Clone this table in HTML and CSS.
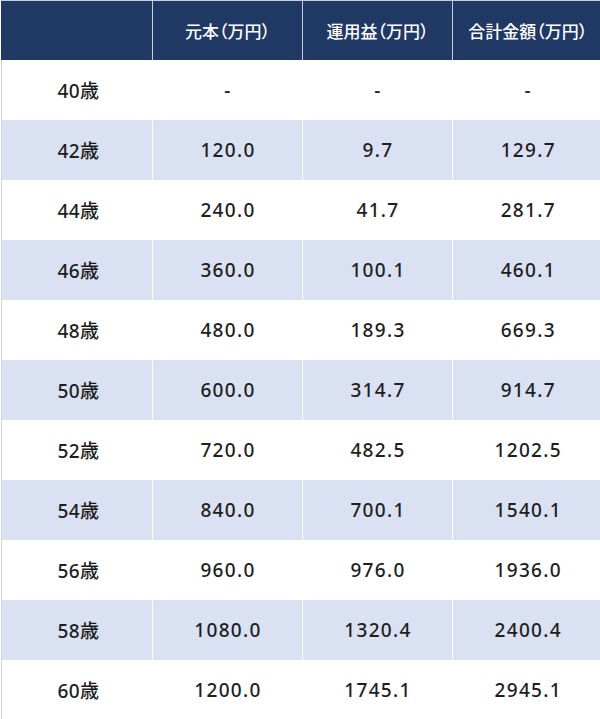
FILE: index.html
```html
<!DOCTYPE html>
<html lang="ja">
<head>
<meta charset="utf-8">
<link rel="stylesheet" href="styles.css">
</head>
<body>
<table class="sim">
  <colgroup>
    <col class="c-age"><col class="c-val"><col class="c-val"><col class="c-val">
  </colgroup>
  <thead>
    <tr><th></th><th>元本（万円）</th><th>運用益（万円）</th><th>合計金額（万円）</th></tr>
  </thead>
  <tbody>
    <tr><td>40歳</td><td>-</td><td>-</td><td>-</td></tr>
    <tr><td>42歳</td><td>120.0</td><td>9.7</td><td>129.7</td></tr>
    <tr><td>44歳</td><td>240.0</td><td>41.7</td><td>281.7</td></tr>
    <tr><td>46歳</td><td>360.0</td><td>100.1</td><td>460.1</td></tr>
    <tr><td>48歳</td><td>480.0</td><td>189.3</td><td>669.3</td></tr>
    <tr><td>50歳</td><td>600.0</td><td>314.7</td><td>914.7</td></tr>
    <tr><td>52歳</td><td>720.0</td><td>482.5</td><td>1202.5</td></tr>
    <tr><td>54歳</td><td>840.0</td><td>700.1</td><td>1540.1</td></tr>
    <tr><td>56歳</td><td>960.0</td><td>976.0</td><td>1936.0</td></tr>
    <tr><td>58歳</td><td>1080.0</td><td>1320.4</td><td>2400.4</td></tr>
    <tr><td>60歳</td><td>1200.0</td><td>1745.1</td><td>2945.1</td></tr>
  </tbody>
</table>
</body>
</html>
```

FILE: styles.css
```css
html, body {
  margin: 0;
  padding: 0;
  background: #ffffff;
}
body {
  padding-left: 1px;
  font-family: "Noto Sans", "Noto Sans CJK JP", sans-serif;
  color: #1e1e1e;
}
.sim {
  border-collapse: collapse;
  table-layout: fixed;
  width: 601px;
  border-left: 1px solid #d0d4dc;
}
.c-age { width: 151px; }
.c-val { width: 150px; }
.sim th {
  height: 59px;
  padding: 0;
  background: #1f3864;
  color: #ffffff;
  font-family: "Noto Sans CJK JP", sans-serif;
  font-feature-settings: "palt";
  font-size: 17px;
  font-weight: 500;
  text-align: center;
  border-left: 1px solid #c7cfdf;
  border-top: 1px solid #c7cfdf;
}
.sim th:first-child { border-left: 1px solid #1f3864; }
.sim td {
  height: 60px;
  padding: 0 0 0 1px;
  text-align: center;
  font-size: 19px;
  font-weight: 500;
  letter-spacing: 1.3px;
  border-left: 1px solid #ffffff;
}
.sim tbody tr:nth-child(even) td {
  background: #d9e1f2;
}
.sim td:first-child {
  border-left: none;
  padding-left: 3px;
  letter-spacing: 0.4px;
}
```
